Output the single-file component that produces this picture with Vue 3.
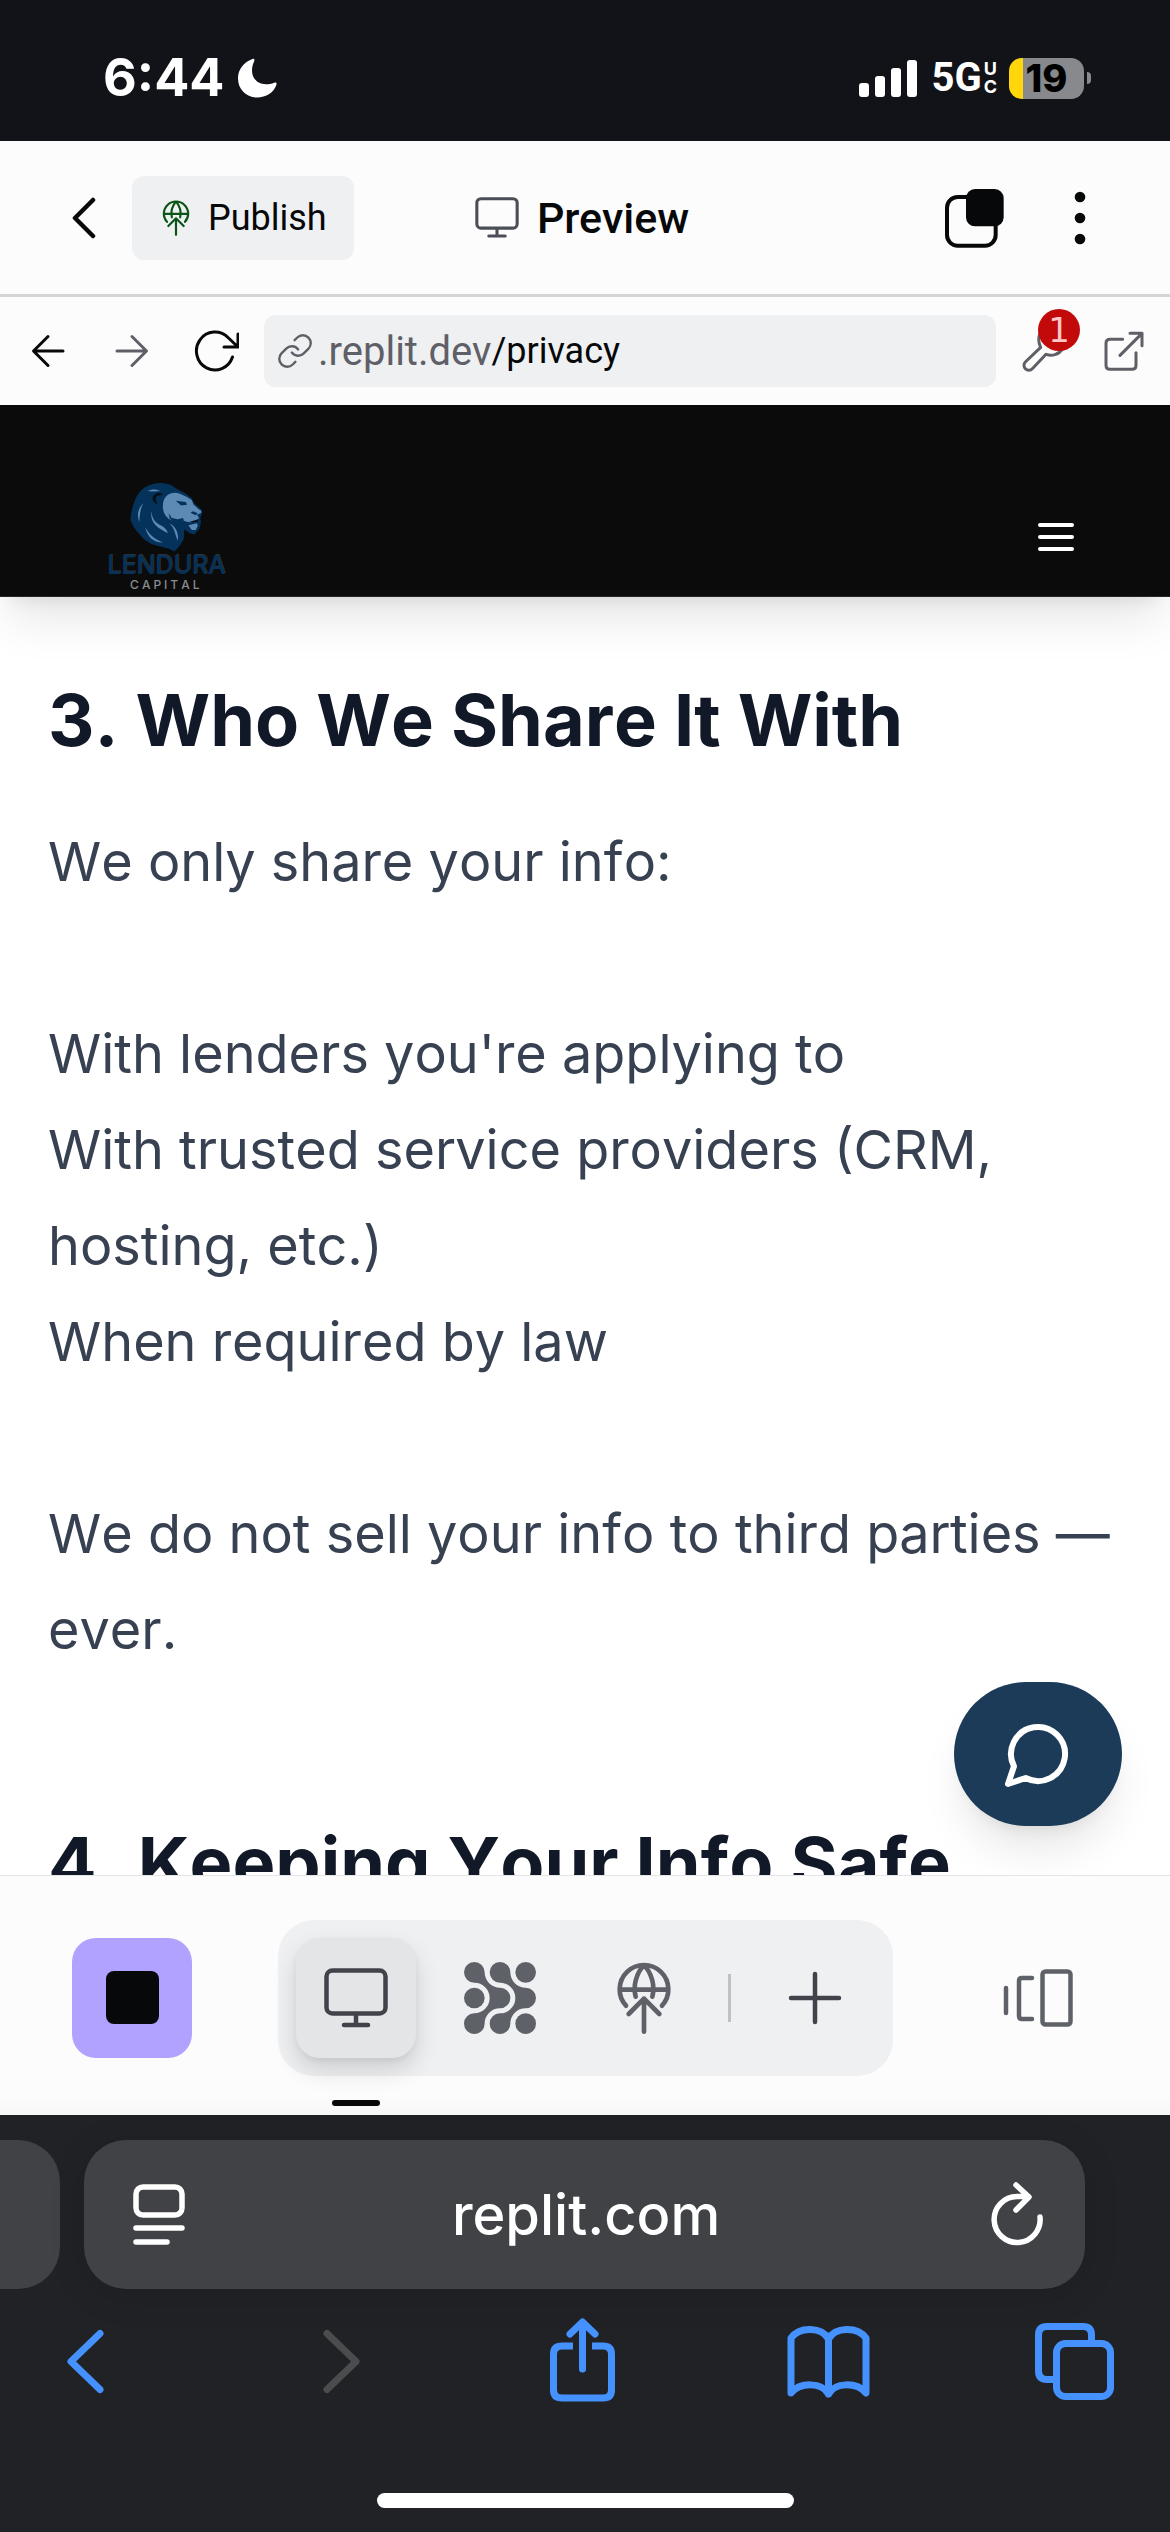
<script setup>
import { ref } from 'vue'

const path = ref('/privacy')
const recipients = [
  "With lenders you're applying to",
  'With trusted service providers (CRM, hosting, etc.)',
  'When required by law',
]
const signalBars = [14, 21, 29, 37]
</script>

<template>
  <div class="screen">
    <header class="status">
      <div class="status-side">
        <span class="clock">6:44</span>
        <svg class="moon" viewBox="0 0 40 40" width="40" height="40" aria-hidden="true">
          <path d="M15.500 1C6 4.500 1 12 1 20.500C1 31.500 9.500 39.500 20 39.500C29 39.500 37 34.500 39.500 26.500C40 24.800 38.800 24 37.200 24.700C34.500 25.800 32 26.300 29 26.300C20.500 26.300 15 20.500 15 12.500C15 8.500 16 6 17.200 3.200C17.900 1.500 17 .5 15.500 1Z" fill="#fff" />
        </svg>
      </div>
      <div class="status-side">
        <span class="signal"><i v-for="h in signalBars" :key="h" :style="{ height: h + 'px' }"></i></span>
        <span class="network">5G</span>
        <span class="network-kind"><span>U</span><span>C</span></span>
        <span class="battery"><span class="battery-body">19</span><i class="battery-cap"></i></span>
      </div>
    </header>

    <nav class="workspace">
      <div class="workspace-left">
        <button class="bare back" aria-label="Back">
          <svg viewBox="0 0 24 42" width="24" height="42" fill="none" stroke="#07080a" stroke-width="4.500" stroke-linecap="round" stroke-linejoin="round"><path d="M21 3L3 21L21 39" /></svg>
        </button>
        <button class="publish">
          <svg viewBox="528 124 168 216" width="28" height="36" fill="none" stroke="#0a5416" stroke-width="13" stroke-linecap="round" stroke-linejoin="round"><path d="M558 255A73 73 0 1 1 666 255M539 207H685M587 228C578 195 590 155 612 134C634 155 646 195 637 228M612 333V234M566 280L612 234L658 280" /></svg>
          Publish
        </button>
      </div>
      <div class="workspace-title">
        <svg viewBox="0 0 64 60" width="44" height="41" fill="none" stroke="#4b4d57" stroke-width="4.500" stroke-linecap="round"><rect x="2.500" y="2.500" width="59" height="43" rx="6" /><path d="M32 46V57M20 57H44" /></svg>
        <span>Preview</span>
      </div>
      <div class="workspace-right">
        <button class="bare" aria-label="Layout">
          <svg viewBox="132 81 180 180" width="60" height="60"><rect x="141" y="108" width="146" height="146" rx="32" fill="none" stroke="#07080a" stroke-width="12" /><rect x="198" y="84" width="113" height="112" rx="27" fill="#07080a" /></svg>
        </button>
        <button class="bare more" aria-label="More">
          <svg viewBox="0 0 12 54" width="12" height="54" fill="#07080a"><circle cx="6" cy="6" r="5.300" /><circle cx="6" cy="27" r="5.300" /><circle cx="6" cy="48" r="5.300" /></svg>
        </button>
      </div>
    </nav>

    <form class="address" @submit.prevent>
      <button type="button" class="bare nav" aria-label="Go back">
        <svg viewBox="0 0 34 34" width="34" height="34" fill="none" stroke="#07080a" stroke-width="3" stroke-linecap="round" stroke-linejoin="round"><path d="M32 17H3M17 2.500L2.500 17L17 31.500" /></svg>
      </button>
      <button type="button" class="bare nav" aria-label="Go forward">
        <svg viewBox="0 0 34 34" width="34" height="34" fill="none" stroke="#5f6067" stroke-width="3" stroke-linecap="round" stroke-linejoin="round"><path d="M2 17H31M17 2.500L31.500 17L17 31.500" /></svg>
      </button>
      <button type="button" class="bare nav" aria-label="Reload preview">
        <svg viewBox="0 0 46 48" width="46" height="48" fill="none" stroke="#07080a" stroke-width="3" stroke-linecap="round" stroke-linejoin="round"><path d="M39.500 30A18.500 19 0 1 1 35 10.500L45 20M45 7V20H31" /></svg>
      </button>
      <label class="path">
        <svg viewBox="0 0 24 24" width="38" height="38" fill="none" stroke="#5f6067" stroke-width="1.500" stroke-linecap="round" stroke-linejoin="round"><path d="M10 13a5 5 0 0 0 7.540.540l3-3a5 5 0 0 0-7.070-7.070l-1.720 1.710" /><path d="M14 11a5 5 0 0 0-7.540-.540l-3 3a5 5 0 0 0 7.070 7.070l1.710-1.710" /></svg>
        <span class="host">.replit.dev</span>
        <input v-model="path" type="text" aria-label="Path" />
      </label>
      <button type="button" class="bare tool" aria-label="Developer tools">
        <svg viewBox="370 120 126 126" width="42" height="42" fill="none" stroke="#5f6067" stroke-width="9" stroke-linecap="round" stroke-linejoin="round"><path d="M424 130C418 145 420 160 426 172L380 216A14.500 14.500 0 0 0 401 236L442 193C460 199 480 194 490 178" /></svg>
        <span class="badge">1</span>
      </button>
      <button type="button" class="bare tool" aria-label="Open in new tab">
        <svg viewBox="606 122 120 120" width="40" height="40" fill="none" stroke="#5f6067" stroke-width="9" stroke-linecap="round" stroke-linejoin="round"><path d="M662 147H624Q612 147 612 159V225Q612 237 624 237H690Q702 237 702 225V187M654 195L720 129M684 129H720V166" /></svg>
      </button>
    </form>

    <main class="site">
      <header class="site-header">
        <a class="brand" href="#">
          <svg viewBox="136 68 220 210" width="73" height="70" aria-hidden="true">
            <path fill="#05325a" d="M138 184C138 160 144 138 152 120C158 106 166 94 180 84C196 75 214 70 234 71C252 71 266 78 276 88L300 100L322 116L330 132L352 151L354 162L348 176L350 190L344 210L330 226L316 222L300 210L298 240L284 262L270 277L252 268L228 262L200 254L178 240L158 218L146 200Z" />
            <path fill="#5c8ab5" d="M250 106C262 98 276 98 288 104L306 112L322 122L328 136L346 152C352 154 353 160 348 162L338 166L344 176L336 184L316 190L298 184L296 176L280 180L262 176L252 162L256 178L264 184C246 178 236 162 235 144C234 126 240 114 250 106Z" />
            <path fill="#5c8ab5" d="M312 198L338 192L340 200L334 212H322Z" />
            <path fill="#05325a" d="M274 124L304 128L308 136L290 138ZM326 156L340 162L334 168L318 160Z" />
            <path fill="#071018" d="M236 106C226 96 208 100 204 114C204 126 212 134 220 132C210 122 212 110 222 108ZM306 190L342 180L340 187Z" />
            <path fill="#5c8ab5" d="M188 95C202 88 216 89 228 95C214 96 200 97 188 95ZM176 132C160 146 156 168 164 188C166 166 166 150 176 132ZM202 154C200 176 212 190 228 198C240 204 248 212 250 222C238 214 222 208 212 196C200 184 198 168 202 154ZM254 192C272 200 284 220 280 244C272 230 272 206 254 192ZM182 204C194 226 210 240 236 250C212 252 188 236 182 204Z" />
          </svg>
          <span class="brand-name">LENDURA</span>
          <span class="brand-kind">CAPITAL</span>
        </a>
        <button class="bare" aria-label="Open menu">
          <svg viewBox="0 0 24 24" width="48" height="48" stroke="#fff" stroke-width="2" stroke-linecap="round"><path d="M4 6H20M4 12H20M4 18H20" /></svg>
        </button>
      </header>

      <article class="policy">
        <section>
          <h2>3. Who We Share It With</h2>
          <p>We only share your info:</p>
          <ul>
            <li v-for="item in recipients" :key="item">{{ item }}</li>
          </ul>
          <p>We do not sell your info to third parties — ever.</p>
        </section>
        <section>
          <h2>4. Keeping Your Info Safe</h2>
        </section>
      </article>

      <button class="chat" aria-label="Open chat">
        <svg viewBox="0 0 24 24" width="72" height="72" fill="none" stroke="#fff" stroke-width="2" stroke-linecap="round" stroke-linejoin="round"><path d="M7.900 20A9 9 0 1 0 4 16.100L2 22Z" /></svg>
      </button>
    </main>

    <nav class="dock">
      <button class="stop" aria-label="Stop"><i></i></button>
      <div class="tabs">
        <button class="tab active" aria-label="Preview">
          <svg viewBox="0 0 64 60" width="64" height="60" fill="none" stroke="#41434b" stroke-width="4.500" stroke-linecap="round"><rect x="2.500" y="2.500" width="59" height="43" rx="6" /><path d="M32 46V57M20 57H44" /></svg>
        </button>
        <button class="tab" aria-label="Agent">
          <svg viewBox="72 126 216 216" width="72" height="72" fill="#5f6169">
            <path d="M103 126A31 31 0 0 1 134 157A46 46 0 0 0 180 203A31 31 0 0 1 180 265A46 46 0 0 0 134 311A31 31 0 1 1 103 280A46 46 0 0 0 103 188A31 31 0 0 1 103 126Z" />
            <path d="M180 126A31 31 0 0 1 211 157A46 46 0 0 0 257 203A31 31 0 0 1 257 265A46 46 0 0 0 211 311A31 31 0 1 1 180 280A46 46 0 0 0 180 188A31 31 0 0 1 180 126Z" />
            <circle cx="257" cy="157" r="31" /><circle cx="103" cy="234" r="31" /><circle cx="257" cy="311" r="31" />
          </svg>
        </button>
        <button class="tab" aria-label="Publishing">
          <svg viewBox="528 124 168 216" width="56" height="72" fill="none" stroke="#5f6169" stroke-width="14" stroke-linecap="round" stroke-linejoin="round"><path d="M558 255A73 73 0 1 1 666 255M539 207H685M587 228C578 195 590 155 612 134C634 155 646 195 637 228M612 333V234M566 280L612 234L658 280" /></svg>
        </button>
        <i class="divider"></i>
        <button class="tab" aria-label="New tab">
          <svg viewBox="0 0 54 54" width="54" height="54" stroke="#41434b" stroke-width="4.500" stroke-linecap="round"><path d="M27 3V51M3 27H51" /></svg>
        </button>
      </div>
      <button class="tab" aria-label="All tabs">
        <svg viewBox="0 0 70 58" width="70" height="58" fill="none" stroke="#5f6169" stroke-width="4.500" stroke-linecap="round"><path d="M3 19V44M29 9H19Q16 9 16 12V47Q16 50 19 50H29" /><rect x="39.500" y="2.500" width="28" height="53" rx="3" /></svg>
      </button>
    </nav>

    <footer class="browser">
      <div class="browser-tabs">
        <i class="previous-tab"></i>
        <div class="current-tab">
          <button class="bare" aria-label="Page settings">
            <svg viewBox="0 0 52 64" width="52" height="64" fill="none" stroke="#fff" stroke-width="5.500" stroke-linecap="round"><rect x="3" y="4" width="46" height="28" rx="7" /><path d="M3 45H49M3 59H34" /></svg>
          </button>
          <span>replit.com</span>
          <button class="bare" aria-label="Reload">
            <svg viewBox="0 0 60 70" width="60" height="70" fill="none" stroke="#fff" stroke-width="5.500" stroke-linecap="round" stroke-linejoin="round"><path d="M53 37A23 23 0 1 1 30 16.500H40M29 5L42 17L29 30" /></svg>
          </button>
        </div>
      </div>
      <div class="browser-actions">
        <button class="bare" aria-label="Back"><svg viewBox="0 0 84 88" width="84" height="88"><path d="M57 17.500L28 45.500L57 73.500" /></svg></button>
        <button class="bare" aria-label="Forward" disabled><svg viewBox="0 0 84 88" width="84" height="88"><path d="M36 17.500L65 45.500L36 73.500" /></svg></button>
        <button class="bare" aria-label="Share"><svg viewBox="0 0 84 88" width="84" height="88"><path class="butt" d="M35 30H24Q15.500 30 15.500 38V74Q15.500 82 24 82H65Q73.500 82 73.500 74V38Q73.500 30 65 30H54" /><path d="M44.500 53V7M32 18L44.500 6L57 18" /></svg></button>
        <button class="bare" aria-label="Bookmarks"><svg viewBox="0 0 84 88" width="84" height="88"><path d="M42.500 23C36 11 14 10 5 22V77C14 66 36 66 42.500 78C49 66 71 66 80 77V22C71 10 49 11 42.500 23V78" /></svg></button>
        <button class="bare" aria-label="Tabs"><svg viewBox="0 0 84 88" width="84" height="88"><path class="butt" d="M22 63.500H14Q5.500 63.500 5.500 55V19Q5.500 10.500 14 10.500H50Q58.500 10.500 58.500 19V26" /><rect x="23.500" y="27.500" width="54" height="53" rx="9" /></svg></button>
      </div>
      <i class="home-bar"></i>
    </footer>
  </div>
</template>

<style>
body {
  margin: 0;
}
</style>

<style scoped>
.screen {
  display: flex;
  flex-direction: column;
  height: 100vh;
  overflow: hidden;
  background: #fff;
  font-family: Roboto, 'Noto Sans', sans-serif;
  font-optical-sizing: none;
}
*, *::before, *::after {
  box-sizing: border-box;
}
svg {
  display: block;
  flex: none;
}
button {
  font: inherit;
  color: inherit;
  border: 0;
  padding: 0;
}
.bare {
  display: flex;
  align-items: center;
  justify-content: center;
  background: none;
}

/* status bar */
.status {
  display: flex;
  flex: none;
  align-items: center;
  justify-content: space-between;
  height: 141px;
  padding: 15px 79px 0 103px;
  background: #121318;
  color: #fff;
  font-family: Inter, sans-serif;
}
.status-side {
  display: flex;
  align-items: center;
}
.clock {
  font-size: 52px;
  font-weight: 700;
  line-height: 60px;
}
.moon {
  margin-left: 13px;
}
.signal {
  display: flex;
  align-items: flex-end;
  gap: 6px;
  margin-right: 14px;
}
.signal i {
  width: 10px;
  border-radius: 3px;
  background: #fff;
}
.network {
  font-family: Roboto, sans-serif;
  font-size: 40px;
  font-weight: 700;
  line-height: 48px;
}
.network-kind {
  display: flex;
  flex-direction: column;
  margin: 0 12px 0 2px;
  font-size: 18px;
  font-weight: 700;
  line-height: 18px;
}
.battery {
  display: flex;
  align-items: center;
  gap: 3px;
}
.battery-body {
  width: 75px;
  height: 41px;
  border-radius: 13px;
  background: linear-gradient(90deg, #ffd60a 14px, #88898d 14px);
  color: #000;
  font-size: 38px;
  font-weight: 800;
  line-height: 41px;
  text-align: center;
}
.battery-cap {
  width: 4px;
  height: 12px;
  border-radius: 0 6px 6px 0;
  background: #88898d;
}

/* workspace header */
.workspace {
  display: grid;
  grid-template-columns: 1fr auto 1fr;
  flex: none;
  align-items: center;
  height: 156px;
  padding: 0 66px 0 60px;
  border-bottom: 3px solid #d4d5d7;
  background: #fcfcfc;
  color: #07080a;
}
.workspace-left {
  display: flex;
  align-items: center;
  gap: 24px;
}
.back, .more {
  width: 48px;
  height: 84px;
}
.publish {
  display: flex;
  align-items: center;
  gap: 18px;
  height: 84px;
  padding: 0 27px 0 30px;
  border-radius: 12px;
  background: #eff0f2;
  font-size: 36px;
}
.workspace-title {
  display: flex;
  align-items: center;
  gap: 18px;
  font-size: 43px;
  font-weight: 500;
}
.workspace-right {
  display: flex;
  align-items: center;
  justify-content: flex-end;
  gap: 52px;
}

/* preview address row */
.address {
  display: flex;
  flex: none;
  align-items: center;
  gap: 12px;
  height: 108px;
  padding: 0 12px;
  background: #fcfcfc;
}
.nav {
  width: 72px;
  height: 72px;
}
.tool {
  position: relative;
  width: 69px;
  height: 72px;
}
.path {
  display: flex;
  flex: 1;
  align-items: center;
  min-width: 0;
  height: 72px;
  padding: 0 12px;
  border-radius: 12px;
  background: #eff0f2;
}
.host {
  margin-left: 4px;
  color: #5f6067;
  font-size: 40px;
}
.path input {
  flex: 1;
  min-width: 0;
  padding: 0;
  border: 0;
  outline: 0;
  background: none;
  color: #07080a;
  font: 36px Roboto, sans-serif;
}
.badge {
  position: absolute;
  top: -6px;
  left: 30px;
  width: 42px;
  height: 42px;
  border-radius: 50%;
  background: #c20a0a;
  color: #ffc7c7;
  font: 34px/42px 'DejaVu Sans', sans-serif;
  text-align: center;
}

/* previewed site */
.site {
  position: relative;
  flex: 1;
  min-height: 0;
  overflow: hidden;
  font-family: Inter, sans-serif;
  font-kerning: none;
}
.site-header {
  position: relative;
  display: flex;
  align-items: flex-end;
  justify-content: space-between;
  height: 192px;
  padding: 0 90px 4px 107px;
  border-bottom: 1px solid #262628;
  background: #0b0b0b;
  box-shadow: 0 30px 45px -9px rgba(0, 0, 0, 0.1), 0 12px 18px -12px rgba(0, 0, 0, 0.1);
}
.site-header .bare {
  margin-bottom: 31px;
}
.brand {
  display: flex;
  flex-direction: column;
  align-items: center;
  text-decoration: none;
}
.brand-name {
  color: #05325a;
  font-size: 25px;
  font-weight: 500;
  line-height: 26px;
  text-shadow: 1px -1px 0 rgba(150, 170, 190, 0.25);
}
.brand-kind {
  color: #8b8d90;
  font-size: 12px;
  font-weight: 500;
  line-height: 14px;
  letter-spacing: 3px;
}
.policy {
  padding: 75px 48px 0;
}
h2 {
  margin: 0 0 46px;
  color: #111827;
  font-size: 72px;
  font-weight: 700;
  line-height: 96px;
}
section + section {
  margin-top: 137px;
}
p, ul {
  margin: 0;
  padding: 0;
  color: #374151;
  font-size: 54px;
  line-height: 96px;
  list-style: none;
}
ul {
  margin: 96px 0;
}
.chat {
  position: absolute;
  right: 48px;
  bottom: 49px;
  display: flex;
  align-items: center;
  justify-content: center;
  width: 168px;
  height: 144px;
  border-radius: 72px;
  background: #1b3b59;
  box-shadow: 0 30px 45px -9px rgba(0, 0, 0, 0.1), 0 12px 18px -12px rgba(0, 0, 0, 0.1);
}

/* workspace dock */
.dock {
  display: flex;
  flex: none;
  align-items: center;
  justify-content: space-between;
  height: 240px;
  padding: 4px 72px 0;
  border-top: 1px solid #e4e5e7;
  background: linear-gradient(#fcfcfc 92%, #f7f7f7);
}
.stop, .tab {
  display: flex;
  align-items: center;
  justify-content: center;
  width: 120px;
  height: 120px;
  border-radius: 24px;
  background: none;
}
.stop {
  background: #b1a2ff;
}
.stop i {
  width: 53px;
  height: 53px;
  border-radius: 8px;
  background: #07080a;
}
.tabs {
  display: flex;
  align-items: center;
  gap: 24px;
  padding: 18px;
  border-radius: 36px;
  background: #eff0f2;
}
.active {
  position: relative;
  background: #e4e5e7;
  box-shadow: 0 12px 24px rgba(2, 2, 3, 0.14), 0 3px 6px rgba(2, 2, 3, 0.05);
}
.active::after {
  position: absolute;
  bottom: -48px;
  width: 48px;
  height: 6px;
  border-radius: 3px;
  background: #07080a;
  content: '';
}
.divider {
  width: 3px;
  height: 48px;
  background: #c0c1c4;
}

/* browser chrome */
.browser {
  display: flex;
  flex: none;
  flex-direction: column;
  height: 417px;
  padding-top: 25px;
  background: #212226;
}
.browser-tabs {
  display: flex;
  gap: 24px;
  height: 149px;
  padding-right: 85px;
}
.previous-tab {
  width: 60px;
  border-radius: 0 42px 42px 0;
  background: #414245;
}
.current-tab {
  display: flex;
  flex: 1;
  align-items: center;
  justify-content: space-between;
  padding: 0 38px 0 49px;
  border-radius: 42px;
  background: #414245;
  box-shadow: 0 6px 36px rgba(0, 0, 0, 0.12);
  color: #fff;
  font: 500 56px Inter, sans-serif;
}
.browser-actions {
  display: flex;
  justify-content: space-between;
  margin: 27px 53px 0 43px;
}
.browser-actions svg {
  fill: none;
  stroke: #4592ff;
  stroke-width: 7px;
  stroke-linecap: round;
  stroke-linejoin: round;
}
.browser-actions .butt {
  stroke-linecap: butt;
}
.browser-actions button:disabled svg {
  stroke: #4b4c4e;
}
.home-bar {
  align-self: center;
  width: 417px;
  height: 15px;
  margin-top: 89px;
  border-radius: 8px;
  background: #fff;
}
</style>
